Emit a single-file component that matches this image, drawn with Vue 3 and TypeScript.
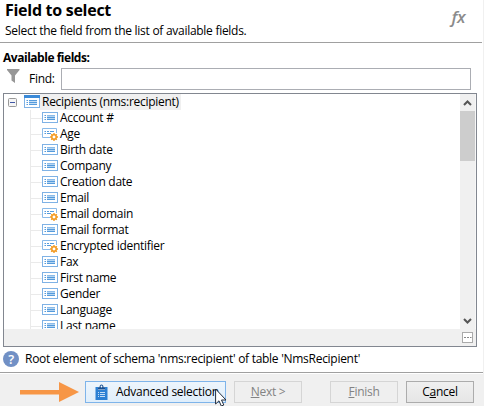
<script setup lang="ts">
interface Field {
  name: string
  computed?: boolean
}

const fields: Field[] = [
  { name: 'Account #' },
  { name: 'Age', computed: true },
  { name: 'Birth date' },
  { name: 'Company' },
  { name: 'Creation date' },
  { name: 'Email' },
  { name: 'Email domain', computed: true },
  { name: 'Email format' },
  { name: 'Encrypted identifier', computed: true },
  { name: 'Fax' },
  { name: 'First name' },
  { name: 'Gender' },
  { name: 'Language' },
  { name: 'Last name' },
]
</script>

<template>
  <div class="dialog">
    <header class="header">
      <div class="heading">
        <h1>Field to select</h1>
        <p>Select the field from the list of available fields.</p>
      </div>
      <span class="fx">fx</span>
    </header>

    <main class="content">
      <div class="label">Available fields:</div>
      <div class="find">
        <svg class="funnel" width="13" height="14" viewBox="0 0 13 14">
          <path d="M0 0H12.5V1L8 6.5V14L4.5 11.5V6.5L0 1Z" fill="#979797" />
        </svg>
        <label for="find">Find:</label>
        <input id="find" type="text" />
      </div>

      <div class="tree">
        <div class="view">
          <div class="nodes">
            <div class="root">
              <svg class="toggle" width="9" height="9" viewBox="0 0 9 9">
                <rect x=".5" y=".5" width="8" height="8" rx="1" fill="#f5f5f5" stroke="#999" />
                <path d="M2 4.5H7" stroke="#4157a5" />
              </svg>
              <svg class="root-icon" width="16" height="13" viewBox="0 0 16 13">
                <rect x=".5" y=".5" width="15" height="12" fill="#fff" stroke="#7fb2e5" />
                <path d="M0 0H16V3H0Z" fill="#3b8ad8" />
                <path d="M5 5H13V10H5Z" fill="#c5def5" />
                <path d="M2.5 5.5H4M2.5 7.5H4M2.5 9.5H4M5 5.5H13M5 7.5H13M5 9.5H13" stroke="#559bdc" />
              </svg>
              <span class="root-name">Recipients (nms:recipient)</span>
            </div>
            <div v-for="f in fields" :key="f.name" class="node">
              <span class="branch"></span>
              <svg class="icon" width="16" height="13" viewBox="0 0 16 13">
                <template v-if="f.computed">
                  <path d="M14.5 5V.5H.5V9.5H8" fill="#fff" stroke="#8bbbe9" />
                  <path d="M2.5 3.5H4M2.5 5.5H4M5 3.5H7M8 3.5H12M5 5.5H9" stroke="#559bdc" />
                  <path d="M12 5V13M8 9H16M9.2 6.2L14.8 11.8M14.8 6.2L9.2 11.8" stroke="#f29a22" stroke-width="1.4" />
                  <circle cx="12" cy="9" r="2.2" fill="#fff" stroke="#f29a22" stroke-width="1.5" />
                </template>
                <template v-else>
                  <rect x=".5" y=".5" width="15" height="10" fill="#fff" stroke="#7fb2e5" />
                  <path d="M5 3H13V8H5Z" fill="#b5d5f2" />
                  <path d="M2.5 3.5H4M2.5 5.5H4M2.5 7.5H4M5 5.5H13M5 7.5H13" stroke="#559bdc" />
                  <path d="M5 3.5H13" stroke="#8bbbe9" />
                </template>
              </svg>
              <span class="name">{{ f.name }}</span>
            </div>
          </div>
          <div class="scrollbar">
            <svg class="up" width="9" height="6" viewBox="0 0 9 6">
              <path d="M1 5L4.5 1.5L8 5" fill="none" stroke="#555" stroke-width="2" />
            </svg>
            <div class="thumb"></div>
            <svg class="down" width="9" height="6" viewBox="0 0 9 6">
              <path d="M1 1L4.5 4.5L8 1" fill="none" stroke="#555" stroke-width="2" />
            </svg>
          </div>
        </div>
        <div class="tree-foot">
          <svg width="11" height="11" viewBox="0 0 11 11">
            <rect x=".5" y=".5" width="10" height="10" fill="#fff" stroke="#aaa" />
            <path d="M2 5.5H4M5 5.5H7M8 5.5H9.5" stroke="#888" />
          </svg>
        </div>
      </div>

      <div class="info">
        <span class="help">?</span>
        <span>Root element of schema 'nms:recipient' of table 'NmsRecipient'</span>
      </div>
    </main>

    <footer class="footer">
      <svg class="arrow" width="59" height="20" viewBox="0 0 59 20">
        <path d="M0 8H39V0L59 10L39 20V12.5H0Z" fill="#f79646" />
      </svg>
      <button class="btn advanced">
        <svg width="13" height="16" viewBox="0 0 13 16">
          <path d="M.5 3H3V6H10V3H12.5V16H.5Z" fill="#2c80d3" />
          <path d="M3 5.5V3.2H4.5C4.5 -.3 8.5 -.3 8.5 3.2H10V5.5Z" fill="#174f91" />
          <circle cx="6.5" cy="2.5" r=".9" fill="#fff" />
          <path d="M3 8.5H4M5 8.5H10M3 10.5H4M5 10.5H10M3 12.5H4M5 12.5H10" stroke="#c4ddf5" />
        </svg>
        <span>Advanced selection</span>
        <svg class="cursor" width="12" height="19" viewBox="0 0 12 19">
          <path d="M.6 1V16L4 12.8L6.3 18L8.8 17L6.5 12H11Z" fill="#fff" stroke="#222c3c" />
        </svg>
      </button>
      <button class="btn next" disabled><span><u>N</u>ext &gt;</span></button>
      <button class="btn finish" disabled><span><u>F</u>inish</span></button>
      <button class="btn cancel"><span>C<u>a</u>ncel</span></button>
    </footer>
  </div>
</template>

<style>
body {
  margin: 0;
  overflow: hidden;
}
</style>

<style scoped>
* {
  box-sizing: border-box;
}
.dialog {
  width: 484px;
  height: 406px;
  display: flex;
  flex-direction: column;
  border-right: 1px solid #f0f0f0;
  background: #fff;
  color: #000;
  font: 12px/16px "Open Sans", "Noto Sans", sans-serif;
  letter-spacing: -0.28px;
  white-space: nowrap;
}
.header {
  height: 43px;
  margin-right: 1px;
  padding: 0 17px 0 5px;
  display: flex;
  justify-content: space-between;
  border-bottom: 1px solid #a0a0a0;
}
h1 {
  margin: 0;
  font-size: 16px;
  line-height: 21px;
  font-weight: 700;
  letter-spacing: -0.28px;
}
p {
  margin: 2px 0 0;
}
.fx {
  padding-top: 7px;
  font: italic 600 17px/20px "Open Sans", sans-serif;
  letter-spacing: -0.5px;
  color: #8b8b8b;
}
.content {
  height: 329px;
  padding: 7px 6px 0 3px;
}
.label {
  height: 17px;
  font-weight: 700;
  letter-spacing: -0.47px;
}
.find {
  height: 24px;
  padding-left: 4px;
  display: flex;
  align-items: center;
}
.funnel {
  margin-top: -6px;
}
.find label {
  width: 32px;
  margin: -1px 0 0 9px;
}
.find input {
  width: 410px;
  height: 22px;
  margin: 0;
  padding: 0 4px;
  border: 1px solid #abadb3;
  background: #fff;
  outline: none;
}
.tree {
  width: 474px;
  height: 254px;
  margin-top: 2px;
  border: 1px solid #828790;
  background: #fff;
}
.view {
  height: 235px;
  display: flex;
  overflow: hidden;
}
.nodes {
  flex: 1;
}
.root,
.node {
  height: 16px;
  display: flex;
  align-items: center;
}
.root {
  padding-left: 4px;
}
.root-icon {
  margin: -1px 0 0 7px;
}
.root-name {
  height: 16px;
  padding: 0 2px;
  background: #f0f0f0;
}
.node {
  padding-left: 26px;
}
.branch {
  width: 12px;
  height: 16px;
  border-left: 1px solid #eaeaea;
  background: linear-gradient(#eaeaea, #eaeaea) 0 8px / 12px 1px no-repeat;
}
.icon {
  margin-top: 1px;
}
.name {
  margin-left: 2px;
}
.scrollbar {
  width: 16px;
  display: flex;
  flex-direction: column;
  align-items: center;
  background: #f0f0f0;
  border-right: 1px solid #f7f7f7;
}
.up {
  margin-top: 6px;
}
.thumb {
  width: 15px;
  height: 50px;
  margin-top: 5px;
  background: #cdcdcd;
}
.down {
  margin: auto 0 5px;
}
.tree-foot {
  height: 17px;
  padding: 3px 3px 0 0;
  display: flex;
  justify-content: flex-end;
  background: #f0f0f0;
}
.info {
  height: 24px;
  display: flex;
  align-items: center;
  gap: 6px;
}
.help {
  width: 16px;
  height: 16px;
  border-radius: 50%;
  background: #7190c5;
  color: #fff;
  font-size: 13px;
  font-weight: 600;
  text-align: center;
}
.footer {
  height: 34px;
  padding: 8px 0 0 20px;
  display: flex;
  background: #f0f0f0;
  border-top: 1px solid #a0a0a0;
  box-shadow: inset 0 1px #fff;
}
.arrow {
  margin-top: 1px;
}
.btn {
  width: 68px;
  height: 22px;
  padding: 0;
  display: flex;
  align-items: center;
  justify-content: center;
  border: 1px solid #acacac;
  background: linear-gradient(#f0f0f0, #e6e6e6);
  font: inherit;
  letter-spacing: inherit;
  color: #000;
}
.btn:disabled {
  border-color: #d5d5d5;
  background: #efefef;
  color: #838383;
}
.btn u {
  text-underline-offset: 1px;
}
.advanced {
  position: relative;
  width: 141px;
  margin-left: 6px;
  padding-left: 9px;
  justify-content: flex-start;
  gap: 8px;
  border-color: #7eb4ea;
  background: linear-gradient(#edf5fc, #dfeefb);
}
.cursor {
  position: absolute;
  left: 129px;
  top: 6px;
}
.next {
  margin-left: 8px;
}
.finish {
  margin-left: 28px;
}
.cancel {
  margin-left: 8px;
}
</style>
